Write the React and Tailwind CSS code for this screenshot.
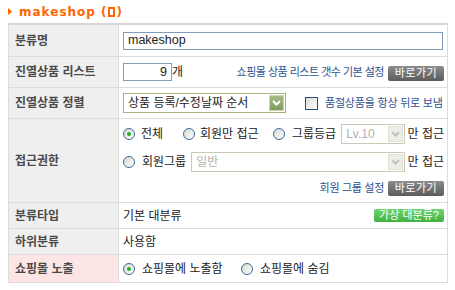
import React from "react";

const font = "font-['Liberation_Sans','Noto_Sans_CJK_KR',sans-serif]";

const Radio = ({ checked }) => (
  <span className="inline-flex items-center justify-center w-[12px] h-[12px] rounded-full border border-[#3a6a9c] bg-linear-to-br from-[#d8d8d0] to-white shrink-0">
    {checked && <span className="w-[4px] h-[4px] rounded-full bg-[#24b024]" />}
  </span>
);

const Chevron = ({ color }) => (
  <svg width="9" height="6" viewBox="0 0 9 6">
    <path d="M1 1 L4.5 4.5 L8 1" fill="none" stroke={color} strokeWidth="2" />
  </svg>
);

const GoButton = () => (
  <span className="inline-flex items-center justify-center h-[15px] w-[56px] rounded-[2px] bg-linear-to-b from-[#8c8c8c] to-[#5c5c5c] text-white text-[11px] leading-none tracking-[0.5px]">
    바로가기
  </span>
);

const DisabledSelect = ({ value, w }) => (
  <span className={`flex items-center justify-between h-[20px] ${w} border border-[#cbc8b8] bg-white pl-[4px] pr-[1px]`}>
    <span className="text-[12px] text-[#b0b0b0] leading-none">{value}</span>
    <span className="w-[15px] h-[16px] bg-[#eeede6] border border-[#e2e0d6] flex items-center justify-center">
      <Chevron color="#c0c0c0" />
    </span>
  </span>
);

const Row = ({ label, h, pink, last, children }) => (
  <div className={`flex ${h} ${last ? "" : "border-b border-[#dcdcdc]"}`}>
    <div
      className={`w-[110px] shrink-0 border-r border-[#dcdcdc] flex items-center pl-[6px] font-bold text-[12px] text-[#4a4a4a] ${
        pink ? "bg-[#fde5e5]" : "bg-[#efefef]"
      }`}
    >
      {label}
    </div>
    <div className="flex-1 min-w-0 pl-[4px] pr-[3px]">{children}</div>
  </div>
);

export default function App() {
  return (
    <div className={`w-[455px] h-[290px] bg-white ${font} text-[#222]`}>
      {/* Title */}
      <div className="h-[23px] flex items-center pl-[8px]">
        <svg width="4" height="7" viewBox="0 0 4 7" className="mr-[7px]">
          <path d="M0 0 L4 3.5 L0 7 Z" fill="#ff6600" />
        </svg>
        <span className="font-['DejaVu_Sans',sans-serif] font-bold text-[12px] text-[#ff6600] tracking-[1px] leading-none flex items-center">
          makeshop (
          <span className="inline-block w-[7px] h-[10px] border-2 border-[#ff6600] mr-[2px]" />)
        </span>
      </div>

      <div className="ml-[8px] w-[440px] border-x border-b border-[#dcdcdc] border-t-2 border-t-[#d6d6d6]">
        <Row label="분류명" h="h-[32px]">
          <div className="h-full flex items-center">
            <div className="w-[320px] h-[18px] border border-[#7f9db9] flex items-center pl-[4px] text-[12.5px] leading-none">
              makeshop
            </div>
          </div>
        </Row>

        <Row label="진열상품 리스트" h="h-[31px]">
          <div className="h-full flex items-center">
            <div className="w-[49px] h-[18px] border border-[#7f9db9] flex items-center justify-end pr-[4px] text-[12.5px] leading-none">
              9
            </div>
            <span className="text-[12px] leading-none">개</span>
            <span className="ml-auto text-[11px] tracking-[-0.5px] text-[#2a5290] leading-none">
              쇼핑몰 상품 리스트 갯수 기본 설정
            </span>
            <span className="ml-[4px]">
              <GoButton />
            </span>
          </div>
        </Row>

        <Row label="진열상품 정렬" h="h-[31px]">
          <div className="h-full flex items-center">
            <div className="w-[163px] h-[20px] border border-[#a2b77f] flex items-center justify-between pl-[4px] pr-[1px]">
              <span className="text-[12px] leading-none">상품 등록/수정날짜 순서</span>
              <span className="w-[15px] h-[16px] bg-linear-to-b from-[#a4bd86] to-[#7f9c5e] border border-[#c9d8b6] flex items-center justify-center">
                <Chevron color="#ffffff" />
              </span>
            </div>
            <span className="ml-[19px] w-[13px] h-[13px] border border-[#1c5180] bg-linear-to-br from-[#dcdcd7] to-white shrink-0" />
            <span className="ml-[7px] text-[11px] tracking-[-0.2px] text-[#2a5290] leading-none">
              품절상품을 항상 뒤로 보냄
            </span>
          </div>
        </Row>

        <Row label="접근권한" h="h-[84px]">
          <div className="flex flex-col pt-[5px] text-[12px] leading-none">
            <div className="h-[20px] flex items-center">
              <div className="w-[60px] flex items-center">
                <Radio checked />
                <span className="ml-[6px]">전체</span>
              </div>
              <div className="w-[90px] flex items-center">
                <Radio />
                <span className="ml-[5px]">회원만 접근</span>
              </div>
              <Radio />
              <span className="ml-[7px]">그룹등급</span>
              <span className="ml-[5px]">
                <DisabledSelect value="Lv.10" w="w-[64px]" />
              </span>
              <span className="ml-auto">만 접근</span>
            </div>
            <div className="h-[20px] mt-[8px] flex items-center">
              <Radio />
              <span className="ml-[7px]">회원그룹</span>
              <span className="ml-[5px]">
                <DisabledSelect value="일반" w="w-[214px]" />
              </span>
              <span className="ml-auto">만 접근</span>
            </div>
            <div className="h-[15px] mt-[9px] flex items-center justify-end">
              <span className="text-[11px] tracking-[-0.3px] text-[#2a5290] leading-none">회원 그룹 설정</span>
              <span className="ml-[4px]">
                <GoButton />
              </span>
            </div>
          </div>
        </Row>

        <Row label="분류타입" h="h-[26px]">
          <div className="h-full flex items-center text-[12px] leading-none">
            <span>기본 대분류</span>
            <span className="ml-auto inline-flex items-center justify-center h-[13px] w-[70px] rounded-[2px] bg-linear-to-b from-[#6fd46f] to-[#3fb23f] text-white text-[11px] leading-none">
              가상 대분류?
            </span>
          </div>
        </Row>

        <Row label="하위분류" h="h-[26px]">
          <div className="h-full flex items-center text-[12px] leading-none">사용함</div>
        </Row>

        <Row label="쇼핑몰 노출" h="h-[27px]" pink last>
          <div className="h-full flex items-center text-[12px] leading-none">
            <div className="w-[118px] flex items-center">
              <Radio checked />
              <span className="ml-[7px]">쇼핑몰에 노출함</span>
            </div>
            <Radio />
            <span className="ml-[7px]">쇼핑몰에 숨김</span>
          </div>
        </Row>
      </div>
    </div>
  );
}
